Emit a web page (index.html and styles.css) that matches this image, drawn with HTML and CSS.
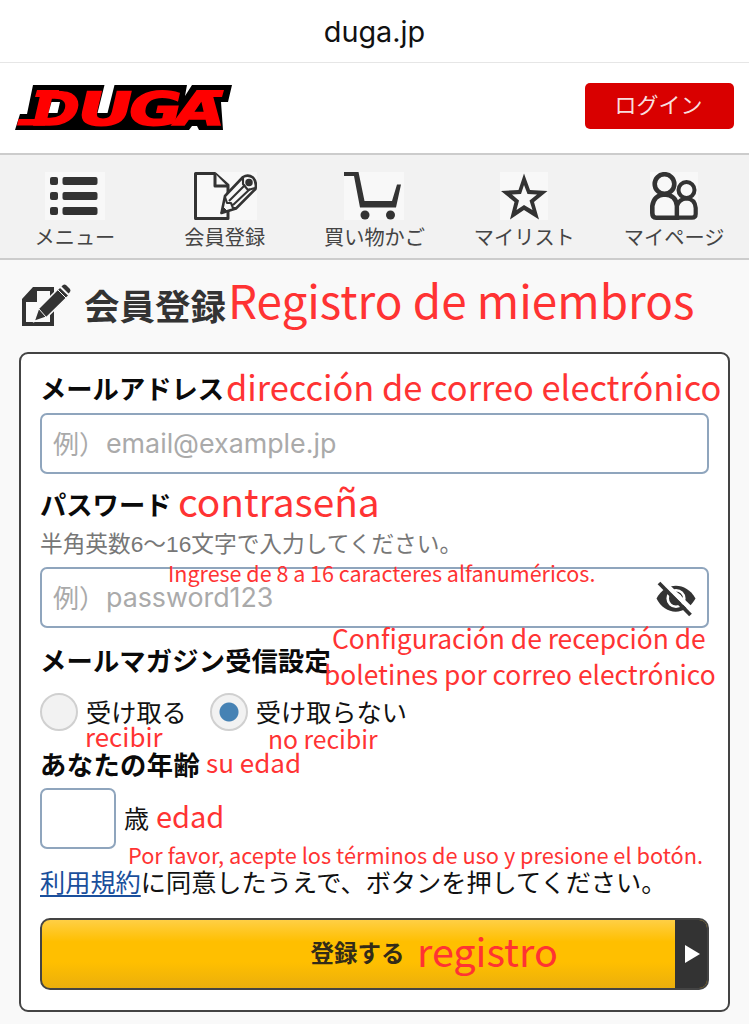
FILE: index.html
```html
<!DOCTYPE html>
<html lang="ja">
<head>
<meta charset="utf-8">
<title>会員登録 - DUGA</title>
<link rel="stylesheet" href="styles.css">
</head>
<body>
<div class="address">duga.jp</div>
<header class="header">
  <svg class="logo" viewBox="0 0 220 50" width="220" height="50" role="img" aria-label="DUGA">
    <path d="M18 2H217L213 19H206L208 47H184L182 43H177L174 47H0L5 31H12Z" fill="#000"/>
    <g class="logo-text" transform="translate(0 41.500) skewX(-13)">
      <text x="14" y="0" textLength="47" lengthAdjust="spacingAndGlyphs">D</text>
      <text x="59" y="0" textLength="55" lengthAdjust="spacingAndGlyphs">U</text>
      <text x="110" y="0" textLength="53" lengthAdjust="spacingAndGlyphs">G</text>
      <text x="157" y="0" textLength="48" lengthAdjust="spacingAndGlyphs">A</text>
    </g>
    <path d="M3.500 36H30V42.500H2ZM181 7H209L207 14H186ZM22 7H44V14H20Z" fill="#f00"/>
    <path d="M89.500 2H99.500L92.500 30H82.500ZM36.500 19H45L42.500 30H33.500ZM172 2H177L170 13Z" fill="#fff"/>
  </svg>
  <a class="login">ログイン</a>
</header>
<nav class="nav">
  <a class="nav-item"><svg width="60" height="48" viewBox="0 0 60 48"><path class="tile" d="M0 0H60V48H0Z"/><g fill="#333"><rect x="5" y="5" width="8" height="8" rx="2"/><rect x="17.500" y="5" width="35" height="8" rx="2"/><rect x="5" y="20" width="8" height="8" rx="2"/><rect x="17.500" y="20" width="35" height="8" rx="2"/><rect x="5" y="35" width="8" height="8" rx="2"/><rect x="17.500" y="35" width="35" height="8" rx="2"/></g></svg><span>メニュー</span></a>
  <a class="nav-item"><svg width="64" height="48" viewBox="0 0 64 48"><path class="tile" d="M0 0H64V48H0Z"/><g fill="#f8f8f8" stroke="#333" stroke-width="3" stroke-linejoin="round"><path d="M2.500 1.500H22L35 13V46.500H2.500Z"/><path d="M22 1.500V14H34" stroke-width="3"/><path d="M28.500 41L32 24L50 5Q55 2 60 5.500Q64 10 62.500 17L43 36.500Z" stroke-width="2.600"/><path d="M32 25L34 31L38 31L40 36L43 36M36 29L52 13M40 33L57 17" stroke-width="2.100" fill="none"/><path d="M50 6L50 12L55 18L62 16" stroke-width="2.100" fill="none"/><circle cx="56" cy="10.500" r="3" fill="#333" stroke-width="1.500"/><path d="M28 41L30 35L34 39Z" fill="#333" stroke-width="1"/></g></svg><span>会員登録</span></a>
  <a class="nav-item"><svg width="60" height="48" viewBox="0 0 60 48"><path class="tile" d="M0 0H60V48H0Z"/><path d="M0 0H14.500L20.500 29H48L53 12.500H57L52 35.500H16L10 4H0Z" fill="#333"/><circle cx="21" cy="43" r="4.500" fill="#333"/><circle cx="46.500" cy="43" r="4.500" fill="#333"/></svg><span>買い物かご</span></a>
  <a class="nav-item"><svg width="48" height="48" viewBox="0 0 48 48"><path class="tile" d="M0 0H48V48H0Z"/><path fill-rule="evenodd" d="M24 1.500L30 18L47.500 19L34 30L39 47.500L24 38L10 47.500L14.500 30L1 19L18.500 18ZM24 13L21 22L12 22.500L19 28.500L16.500 38L24 33L32.500 38L29.500 28.500L37 22.500L27.500 22Z" fill="#333"/></svg><span>マイリスト</span></a>
  <a class="nav-item"><svg width="48" height="48" viewBox="0 0 48 48"><path class="tile" d="M0 0H48V48H0Z"/><g fill="#f8f8f8" stroke="#333" stroke-width="4.600"><path d="M2.300 41V34Q4 23 14.500 22.500Q26 23 27 34V45.700H6Q2.300 45.700 2.300 41Z"/><circle cx="14.500" cy="12" r="9.800"/><path d="M27 34Q29 27 36.500 26.500Q45 27 45.700 36V42Q45.700 45.700 42 45.700H27Z" stroke-width="4.200"/><circle cx="36.500" cy="18" r="8" stroke-width="4"/></g></svg><span>マイページ</span></a>
</nav>
<main>
  <h1 class="title">
    <svg width="50" height="44" viewBox="0 0 50 44"><path fill-rule="evenodd" d="M12 3H33V42H1V15ZM16 7V18H5V38H29V7Z" fill="#333"/><path d="M13 37.500L17.500 24.500L39 3L48 11.500L26 33Z" fill="#333" stroke="#f9f9f9" stroke-width="1.500"/><path d="M40.500 2.500L42 1Q43.500 0 45 1L49 5Q50 6.500 49 8L47.500 9.500Z" fill="#333"/><path d="M18 25L25 33M36.500 5.500L45 14" stroke="#f9f9f9" stroke-width="1"/></svg>
    <span>会員登録</span>
  </h1>
  <form class="card">
    <div class="label">メールアドレス</div>
    <div class="field"><span class="example">例）</span><span class="mail">email@example.jp</span></div>
    <div class="label label-password">パスワード</div>
    <div class="hint">半角英数6〜16文字で入力してください。</div>
    <div class="field field-password"><span class="example">例）</span><span class="pass">password123</span>
      <svg class="eye" width="40" height="36" viewBox="0 0 40 36"><path d="M0.500 17.500C9 1 30 0 39.500 17.500C30 35 9 35 0.500 17.500Z" fill="#333"/><circle cx="20" cy="17.500" r="8.300" fill="none" stroke="#fff" stroke-width="2.600"/><path d="M20 13Q25 14 24.500 18.500" fill="none" stroke="#fff" stroke-width="2.500"/><path d="M4 -2L38 31" stroke="#fff" stroke-width="5"/><path d="M3 2L34.500 34" stroke="#333" stroke-width="3.800"/></svg>
    </div>
    <div class="label label-magazine">メールマガジン受信設定</div>
    <div class="radios">
      <label class="option"><i class="radio"></i><span>受け取る</span></label>
      <label class="option"><i class="radio checked"></i><span>受け取らない</span></label>
    </div>
    <div class="label label-age">あなたの年齢</div>
    <div class="age"><div class="age-field"></div><span>歳</span></div>
    <p class="terms"><a>利用規約</a>に同意したうえで、ボタンを押してください。</p>
    <div class="submit"><span class="submit-text">登録する</span><span class="submit-arrow"><svg width="15" height="18" viewBox="0 0 15 18"><path d="M0 0L15 9L0 18Z" fill="#fff"/></svg></span></div>
  </form>
</main>
<div class="note n-title">Registro de miembros</div>
<div class="note n-mail">dirección de correo electrónico</div>
<div class="note n-pass">contraseña</div>
<div class="note n-hint">Ingrese de 8 a 16 caracteres alfanuméricos.</div>
<div class="note n-mag1">Configuración de recepción de</div>
<div class="note n-mag2">boletines por correo electrónico</div>
<div class="note n-yes">recibir</div>
<div class="note n-no">no recibir</div>
<div class="note n-age">su edad</div>
<div class="note n-years">edad</div>
<div class="note n-terms">Por favor, acepte los términos de uso y presione el botón.</div>
<div class="note n-submit">registro</div>
</body>
</html>
```
FILE: styles.css
```css
* { box-sizing: border-box; }
body {
  margin: 0;
  position: relative;
  height: 1024px;
  overflow: hidden;
  background: #f9f9f9;
  color: #111;
  font-family: "Noto Sans CJK JP", sans-serif;
  white-space: nowrap;
}
.address {
  height: 63px;
  background: #fff;
  border-bottom: 1.5px solid #e6e6e6;
  font: 28.8px/63px Inter, sans-serif;
  text-align: center;
  color: #111;
}
.header {
  height: 92px;
  padding: 20px 15px 0;
  display: flex;
  justify-content: space-between;
  align-items: flex-start;
  background: #fff;
  border-bottom: 2px solid #ccc;
}
.logo { overflow: visible; }
.logo-text {
  font: bold 46px "DejaVu Sans", sans-serif;
  fill: #f00;
  stroke: #f00;
  stroke-width: 1.6px;
}
.login {
  width: 149px;
  height: 46px;
  padding-right: 2px;
  border-radius: 5px;
  background: #d90000;
  color: #f8dede;
  font-size: 22px;
  line-height: 41px;
  text-align: center;
}
.nav {
  height: 105px;
  padding-top: 17px;
  display: grid;
  grid-template-columns: repeat(5, 1fr);
  background: #f2f2f2;
  border-bottom: 2px solid #ccc;
}
.nav-item {
  display: flex;
  flex-direction: column;
  align-items: center;
  color: #444;
  font-size: 20.2px;
  line-height: 34px;
}
.tile { fill: #f8f8f8; }
.title {
  margin: 0;
  height: 92px;
  padding: 24px 0 0 21px;
  display: flex;
  gap: 13px;
  color: #333;
  font-size: 35.5px;
  line-height: 42px;
}
.card {
  width: 711px;
  height: 660px;
  margin-left: 19px;
  padding: 20px 19px;
  background: #fff;
  border: 2px solid #444;
  border-radius: 9px;
}
.label {
  height: 30px;
  font-size: 26.3px;
  font-weight: bold;
  line-height: 27px;
  color: #0a0a0a;
}
.label-password { margin-top: 16px; }
.label-magazine { margin-top: 18px; letter-spacing: 0.15px; }
.label-age { margin-top: 19px; letter-spacing: 0.4px; }
.hint {
  margin: 8px 0 9px;
  font: 22.7px/32px "Liberation Sans", "Noto Sans CJK JP", sans-serif;
  height: 30px;
  color: #777;
}
.field {
  height: 61px;
  margin-top: 9px;
  padding-left: 11px;
  display: flex;
  align-items: center;
  border: 2px solid #8fa5bd;
  border-radius: 7px;
  font-size: 26px;
  line-height: 55px;
  color: #aaa;
}
.example { width: 53px; margin-top: -3px; }
.mail, .pass { font-family: Inter, sans-serif; font-size: 26.8px; }
.eye { margin: 3px 11px 0 auto; }
.radios { display: flex; gap: 23px; margin-top: 17px; }
.option {
  display: flex;
  align-items: center;
  gap: 8px;
  height: 38px;
  font-size: 25.2px;
}
.option span { margin-top: -3px; }
.radio {
  width: 38px;
  height: 38px;
  border: 2px solid #d0d0d0;
  border-radius: 50%;
  background: #f2f2f2;
}
.checked { background: radial-gradient(circle, #4682b4 9px, #f2f2f2 10px); }
.age {
  margin-top: 8px;
  display: flex;
  align-items: center;
  gap: 8px;
  font-size: 25px;
  height: 61px;
}
.age span { margin-top: -3px; }
.age-field {
  width: 76px;
  height: 61px;
  border: 2px solid #8fa5bd;
  border-radius: 7px;
}
.terms { height: 30px; margin: 18px 0 21px; font-size: 25.2px; line-height: 28px; }
.terms a { color: #1a4f9c; text-decoration: underline; text-decoration-thickness: 2px; text-underline-offset: 3px; }
.submit {
  height: 72px;
  display: flex;
  border: 2px solid #444;
  border-radius: 10px;
  overflow: hidden;
  background: linear-gradient(#ffcf45, #ffbf00 32%, #ffbf00 62%, #ebaf0c);
}
.submit-text {
  flex: 1;
  padding-right: 2px;
  text-align: center;
  font-size: 23.5px;
  font-weight: bold;
  line-height: 65px;
  color: #332b18;
}
.submit-arrow {
  width: 32px;
  padding-left: 3px;
  display: flex;
  align-items: center;
  justify-content: center;
  background: #333;
}
.note {
  position: absolute;
  line-height: 1;
  color: #ff3333;
  font-family: "Noto Sans CJK SC", sans-serif;
}
.n-title { left: 228px; top: 277px; font-size: 45.8px; }
.n-mail { left: 226px; top: 369px; font-size: 34.4px; }
.n-pass { left: 178px; top: 481px; font-size: 38.8px; }
.n-hint { left: 168px; top: 562px; font-size: 21.5px; }
.n-mag1 { left: 332px; top: 625px; font-size: 26.4px; }
.n-mag2 { left: 324px; top: 661px; font-size: 26.35px; }
.n-yes { left: 85px; top: 723px; font-size: 25.9px; }
.n-no { left: 268px; top: 726px; font-size: 24.7px; }
.n-age { left: 206px; top: 749px; font-size: 26px; }
.n-years { left: 156px; top: 801px; font-size: 29px; }
.n-terms { left: 128px; top: 844px; font-size: 21.75px; }
.n-submit { left: 417px; top: 930px; font-size: 39.5px; }
```
